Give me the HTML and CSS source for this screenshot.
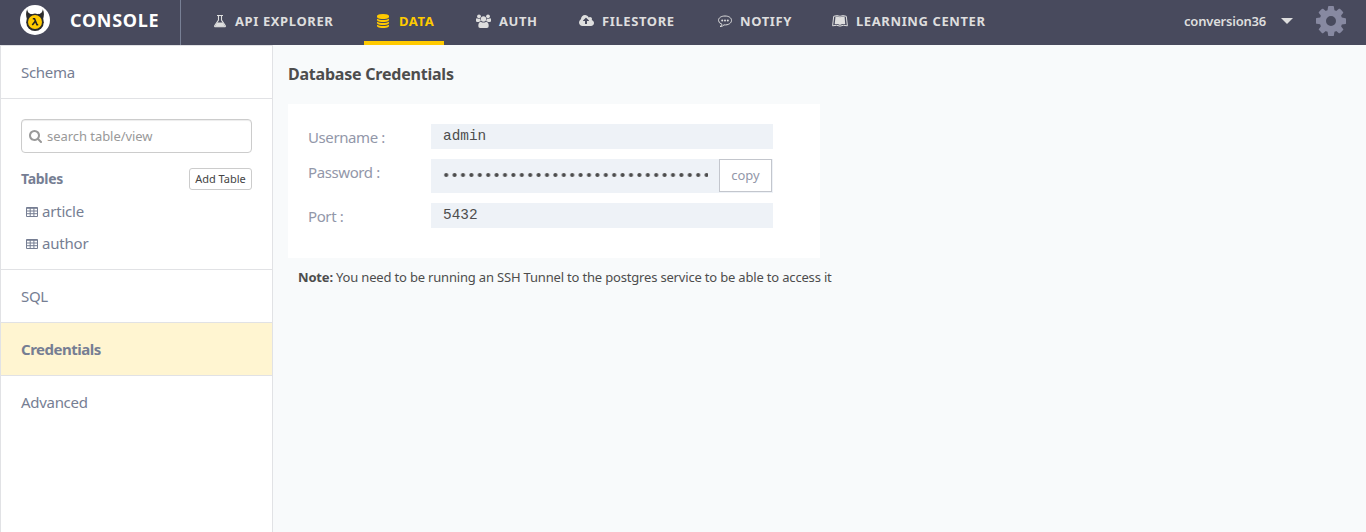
FILE: index.html
```html
<!DOCTYPE html>
<html lang="en">
<head>
<meta charset="utf-8">
<title>Console</title>
<link rel="stylesheet" href="styles.css">
</head>
<body>
<header class="topbar">
  <div class="brand">
    <svg class="logo" viewBox="0 0 30 30">
      <circle cx="15" cy="15" r="15" fill="#fff"/>
      <circle cx="15" cy="17.200" r="8.800" fill="#2b2b2b"/>
      <path d="M7.200 4.300C5.600 7.500 5.900 11 7 14.500L12.500 9.200C9.800 9.200 7.600 8 7.200 4.300ZM22.800 4.300C24.400 7.500 24.100 11 23 14.500L17.500 9.200C20.200 9.200 22.400 8 22.800 4.300Z" fill="#2b2b2b"/>
      <circle cx="15" cy="17" r="7" fill="#ffca00"/>
      <path d="M12.800 13.700h1.700l2.500 6h1.200M15.300 16.300l-3 3.700" fill="none" stroke="#222" stroke-width="1.600"/>
    </svg>
    <span class="brand-name">CONSOLE</span>
  </div>
  <nav class="nav">
    <a class="nav-item api"><svg class="ico" viewBox="0 0 14 14"><path d="M4 1.500h6M5.500 2v4L1.800 11.500Q1.200 12.800 2.500 12.800h9Q12.800 12.800 12.200 11.500L8.500 6V2" fill="none" stroke="currentColor" stroke-width="1.100"/><path d="M4.200 8.600h5.600l2.600 4.200H1.600z" fill="currentColor"/></svg><span>API EXPLORER</span></a>
    <a class="nav-item data active"><svg class="ico" viewBox="0 0 1792 1792"><path fill="currentColor" d="M896 768q237 0 443-43t325-127v170q0 69-103 128t-280 93.500-385 34.500-385-34.500-280-93.500-103-128v-170q119 84 325 127t443 43zm0 768q237 0 443-43t325-127v170q0 69-103 128t-280 93.500-385 34.500-385-34.500-280-93.500-103-128v-170q119 84 325 127t443 43zm0-384q237 0 443-43t325-127v170q0 69-103 128t-280 93.500-385 34.500-385-34.500-280-93.500-103-128v-170q119 84 325 127t443 43zm0-1152q208 0 385 34.500t280 93.500 103 128v128q0 69-103 128t-280 93.500-385 34.500-385-34.500-280-93.500-103-128v-128q0-69 103-128t280-93.500 385-34.500z"/></svg><span>DATA</span></a>
    <a class="nav-item auth"><svg class="ico" viewBox="0 0 15 14"><g fill="currentColor"><circle cx="3" cy="2.300" r="1.900"/><circle cx="12" cy="2.300" r="1.900"/><circle cx="7.500" cy="5" r="2.700"/><path d="M0 7V5.500Q0 4 1 4.200Q2.800 5.300 4.200 4.500Q4.200 6.300 5 7Q3.700 7 3.200 7.900H1.200Q0 7.900 0 7zM15 7V5.500Q15 4 14 4.200Q12.200 5.300 10.800 4.500Q10.800 6.300 10 7Q11.300 7 11.800 7.900h2Q15 7.900 15 7zM2.300 12Q2.300 8 4.800 7.700Q7.500 9.500 10.200 7.700Q12.700 8 12.700 12Q12.700 14 10.900 14H4.100Q2.300 14 2.300 12z"/></g></svg><span>AUTH</span></a>
    <a class="nav-item file"><svg class="ico" viewBox="-64 128 1920 1536"><path fill="currentColor" fill-rule="evenodd" d="M1216 864q0-14-9-23l-352-352q-9-9-23-9t-23 9l-351 351q-10 12-10 24 0 14 9 23t23 9h224v352q0 13 9.500 22.500t22.500 9.500h192q13 0 22.500-9.500t9.500-22.500v-352h224q13 0 22.500-9.500t9.500-22.500zm640 288q0 159-112.500 271.500t-271.500 112.500h-1088q-185 0-316.500-131.500t-131.500-316.500q0-130 70-240t188-165q-2-30-2-43 0-212 150-362t362-150q156 0 285.500 87t188.500 231q71-62 166-62 106 0 181 75t75 181q0 76-41 138 130 31 213.500 135.500t83.500 238.500z"/></svg><span>FILESTORE</span></a>
    <a class="nav-item notify"><svg class="ico" viewBox="0 0 14 14"><path d="M4 10.300Q3.700 11.700 2 12.600Q4.800 12.400 6 10.900C10.500 11.300 13.500 9 13.500 6.400S10.800 2 7 2 .5 3.800.5 6.400Q.6 9 4 10.300z" fill="none" stroke="currentColor"/><g fill="currentColor"><circle cx="4.200" cy="6.500" r="1"/><circle cx="7" cy="6.500" r="1"/><circle cx="9.800" cy="6.500" r="1"/></g></svg><span>NOTIFY</span></a>
    <a class="nav-item learn"><svg class="ico" viewBox="0 0 16 12"><path d="M1.700 1.300Q5-.1 8 1.300Q11-.1 14.300 1.300L15.400 10.800Q11 9.600 8 11.100Q5 9.600.6 10.800z" fill="none" stroke="currentColor"/><path d="M3.500 1.600Q6 1 8 2.300Q10 1 12.600 1.600L13.200 9.200Q10.300 8.500 8 9.900Q5.700 8.500 2.700 9.200z" fill="currentColor"/></svg><span>LEARNING CENTER</span></a>
  </nav>
  <div class="account"><span class="project">conversion36</span><i class="caret"></i>
    <svg class="cog" viewBox="128 128 1536 1536"><path fill="currentColor" d="M1152 896q0-106-75-181t-181-75-181 75-75 181 75 181 181 75 181-75 75-181zm512-109v222q0 12-8 23t-20 13l-185 28q-19 54-39 91 35 50 107 138 10 12 10 25t-9 23q-27 37-99 108t-94 71q-12 0-26-9l-138-108q-44 23-91 38-16 136-29 186-7 28-36 28h-222q-14 0-24.500-8.500t-11.500-21.500l-28-184q-49-16-90-37l-141 107q-10 9-25 9-14 0-25-11-126-114-165-168-7-10-7-23 0-12 8-23 15-21 51-66.500t54-70.500q-27-50-41-99l-183-27q-13-2-21-12.500t-8-23.500v-222q0-12 8-23t19-13l186-28q14-46 39-92-40-57-107-138-10-12-10-24 0-10 9-23 26-36 98.500-107.500t94.500-71.500q13 0 26 10l138 107q44-23 91-38 16-136 29-186 7-28 36-28h222q14 0 24.500 8.500t11.500 21.500l28 184q49 16 90 37l142-107q9-9 24-9 13 0 25 10 129 119 165 170 7 8 7 22 0 12-8 23-15 21-51 66.500t-54 70.500q26 50 41 98l183 28q13 2 21 12.500t8 23.500z"/></svg>
  </div>
</header>
<div class="layout">
  <aside class="sidebar">
    <a class="side-link">Schema</a>
    <section class="tables">
      <div class="search"><svg class="search-ico" viewBox="64 128 1664 1664"><path fill="currentColor" d="M1216 832q0-185-131.500-316.500t-316.500-131.500-316.500 131.500-131.500 316.500 131.500 316.500 316.500 131.500 316.500-131.500 131.500-316.500zm512 832q0 52-38 90t-90 38q-54 0-90-38l-343-342q-179 124-399 124-143 0-273.500-55.500t-225-150-150-225-55.500-273.500 55.500-273.500 150-225 225-150 273.500-55.500 273.500 55.500 225 150 150 225 55.500 273.500q0 220-124 399l343 343q37 37 37 90z"/></svg><span class="placeholder">search table/view</span></div>
      <div class="tables-head"><b class="tables-title">Tables</b><button class="add">Add Table</button></div>
      <a class="table-row"><svg class="grid-ico" viewBox="0 0 12 10"><path d="M.5.500h11v9H.5zM0 1.300h12M0 4h12M0 6.700h12M4.200 1v9M7.900 1v9" fill="none" stroke="currentColor"/></svg><span>article</span></a>
      <a class="table-row"><svg class="grid-ico" viewBox="0 0 12 10"><path d="M.5.500h11v9H.5zM0 1.300h12M0 4h12M0 6.700h12M4.200 1v9M7.900 1v9" fill="none" stroke="currentColor"/></svg><span>author</span></a>
    </section>
    <a class="side-link">SQL</a>
    <a class="side-link selected">Credentials</a>
    <a class="side-link last">Advanced</a>
  </aside>
  <main class="content">
    <h1 class="title">Database Credentials</h1>
    <div class="card">
      <div class="field"><span class="label">Username :</span><div class="value">admin</div></div>
      <div class="field tall"><span class="label">Password :</span><div class="value secret"><svg class="dots" viewBox="0 0 266 8"><defs><pattern id="dot" width="8.400" height="8" patternUnits="userSpaceOnUse"><circle cx="4.200" cy="4" r="2.100" fill="#4d4d4d"/></pattern></defs><rect width="266" height="8" fill="url(#dot)"/></svg><button class="copy">copy</button></div></div>
      <div class="field"><span class="label">Port :</span><div class="value">5432</div></div>
    </div>
    <p class="note"><b>Note:</b> You need to be running an SSH Tunnel to the postgres service to be able to access it</p>
  </main>
</div>
</body>
</html>
```
FILE: styles.css
```css
* { box-sizing: border-box; }
body { margin: 0; height: 532px; overflow: hidden; background: #f8fafb; color: #4d4d4d; font-family: "Noto Sans", "Open Sans", sans-serif; font-size: 14px; }
.topbar { display: flex; height: 45px; background: #484a5d; color: #dedede; }
.brand { display: flex; align-items: center; width: 181px; height: 45px; padding: 0 0 5px 20px; border-right: 1px solid #788095; }
.logo { width: 30px; height: 30px; margin-right: 20px; }
.brand-name { color: #fff; font-size: 18px; font-weight: 700; letter-spacing: .7px; }
.nav { display: flex; margin-left: 18px; }
.nav-item { display: flex; align-items: center; height: 45px; padding: 0 0 3px; font-size: 13px; font-weight: 700; letter-spacing: .6px; white-space: nowrap; flex: none; }
.nav-item .ico { width: 14px; height: 14px; margin-right: 8px; flex: none; }
.api { width: 165px; padding-left: 14px; }
.data { width: 80px; padding-left: 12px; }
.nav-item.data .ico { margin-right: 9px; }
.data.active { color: #ffca00; border-bottom: 4px solid #ffca00; padding-bottom: 0; }
.auth { width: 135px; padding-left: 32px; }
.nav-item.auth .ico { width: 15px; }
.file { width: 139px; }
.nav-item.file .ico { width: 15px; }
.notify { width: 114px; }
.learn { width: 160px; }
.nav-item.learn .ico { width: 16px; height: 12px; }
.account { display: flex; align-items: center; margin-left: auto; padding: 0 20px 4px 0; }
.project { width: 97px; font-size: 13px; font-weight: 600; letter-spacing: -.2px; white-space: nowrap; }
.caret { border: 6px solid transparent; border-top-color: #dedede; border-bottom: 0; margin-right: 23px; }
.cog { width: 30px; height: 30px; color: #8789a1; }
.layout { display: flex; height: 487px; }
.sidebar { width: 273px; flex: none; background: #fff; border: 1px solid #e1e2e5; border-bottom: 0; color: #767e93; font-size: 15px; letter-spacing: -.3px; }
.side-link { display: flex; align-items: center; height: 53px; padding-left: 20px; border-bottom: 1px solid #e1e2e5; }
.side-link.last { height: 52px; border-bottom: 0; }
.selected { background: #fff5d1; font-weight: 700; letter-spacing: -.5px; }
.tables { height: 171px; padding: 20px 20px 0; border-bottom: 1px solid #e1e2e5; }
.search { display: flex; align-items: center; height: 34px; padding-left: 7px; border: 1px solid #ccc; border-radius: 4px; box-shadow: inset 0 1px 1px rgba(0,0,0,.075); color: #999; font-size: 13px; letter-spacing: -.05px; }
.search-ico { width: 13px; height: 13px; margin-right: 5px; }
.tables-head { display: flex; align-items: center; justify-content: space-between; height: 22px; margin: 15px 0 5px; font-size: 14px; }
.tables-title { padding-bottom: 2px; }
.add { width: 63px; height: 22px; padding: 0 0 2px; border: 1px solid #ccc; border-radius: 3px; background: #fff; color: #444; font: 11px "Noto Sans", sans-serif; white-space: nowrap; }
.table-row { display: flex; align-items: center; height: 32px; padding-left: 5px; letter-spacing: -.2px; }
.grid-ico { width: 12px; height: 10px; margin: 2px 4px 0 0; }
.content { padding: 17px 0 0 15px; }
.title { margin: 0; height: 42px; font-size: 16px; line-height: 25px; font-weight: 700; letter-spacing: -.22px; white-space: nowrap; }
.card { display: flex; flex-direction: column; gap: 10px; width: 532px; height: 154px; padding: 20px; background: #fff; }
.field { display: flex; height: 25px; }
.field.tall { height: 34px; }
.label { width: 123px; padding-top: 3px; line-height: 20px; font-size: 15px; letter-spacing: -.4px; color: #9297a9; white-space: nowrap; }
.value { width: 342px; padding: 1px 0 0 12px; background: #eef2f7; font: 14.400px/23px "Liberation Mono", monospace; }
.secret { display: flex; align-items: flex-start; padding-top: 0; }
.dots { width: 266px; height: 8px; margin: 12px 11px 0 -1px; }
.copy { width: 53px; height: 33px; padding: 0 0 2px; border: 1px solid #c3c6cd; background: #fff; color: #9297a9; font: 13px "Noto Sans", sans-serif; }
.note { margin: 9px 0 0 10px; font-size: 13px; line-height: 20px; letter-spacing: -.18px; white-space: nowrap; }
```
